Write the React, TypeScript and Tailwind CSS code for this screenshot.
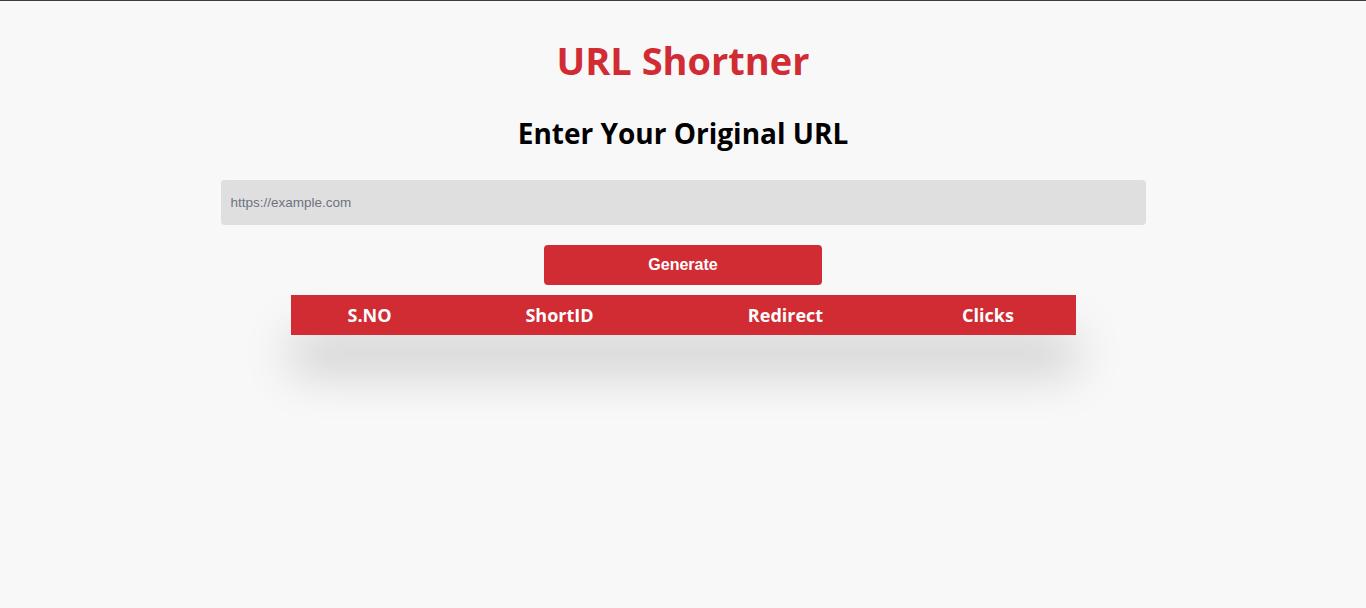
import React from "react";

export default function App() {
  const cols = [
    { label: "S.NO", w: "w-[158px]" },
    { label: "ShortID", w: "w-[222px]" },
    { label: "Redirect", w: "w-[230px]" },
    { label: "Clicks", w: "w-[175px]" },
  ];
  return (
    <div className="min-h-[608px] w-full bg-[#f8f8f8] border-t border-[#3c3c3c] flex flex-col items-center font-['Open_Sans',sans-serif]">
      <h1 className="mt-[35px] text-[38px] leading-[48px] font-bold text-[#d12b33]">URL Shortner</h1>
      <h2 className="mt-[30px] text-[28px] leading-[38px] font-bold text-black">Enter Your Original URL</h2>
      <input
        placeholder="https://example.com"
        className="mt-[28px] w-[925px] h-[45px] rounded-[4px] bg-[#e0dfe0] px-[10px] text-[13.5px] font-['Liberation_Sans',Arial,sans-serif] outline-none placeholder:text-[#6e7280]"
      />
      <button className="mt-[20px] w-[278px] h-[40px] rounded-[4px] bg-[#d12b33] text-white text-[16px] font-bold font-['Liberation_Sans',Arial,sans-serif]">
        Generate
      </button>
      <div className="mt-[10px] flex h-[40px] bg-[#d12b33] shadow-[0_38px_48px_rgba(0,0,0,0.17)]">
        {cols.map((c) => (
          <div key={c.label} className={`${c.w} flex items-center justify-center text-white text-[18px] font-bold`}>
            {c.label}
          </div>
        ))}
      </div>
    </div>
  );
}
